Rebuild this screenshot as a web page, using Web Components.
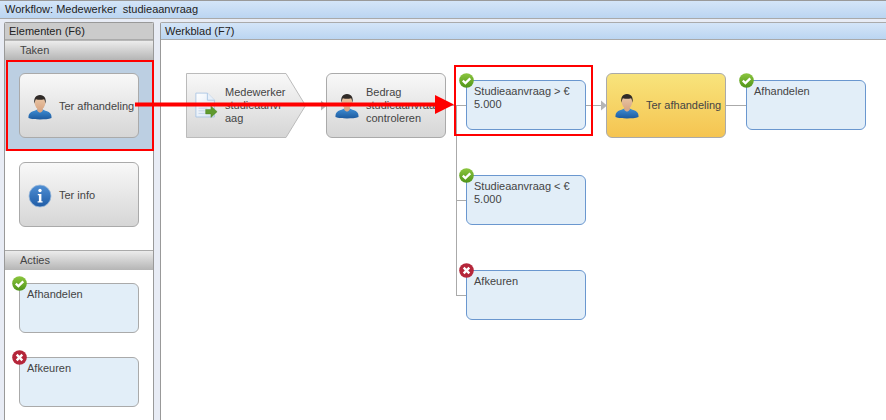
<!DOCTYPE html>
<html><head><meta charset="utf-8">
<style>
html,body{margin:0;padding:0;width:886px;height:420px;overflow:hidden;background:#e8ecf5;font:11px/13px "Liberation Sans",Arial,sans-serif;color:#444}
</style></head><body>
<wf-app>
  <wf-titlebar>Workflow: Medewerker  studieaanvraag</wf-titlebar>
  <wf-columns>
    <wf-elements>
      <wf-section>Taken</wf-section>
      <wf-tasks selected><wf-task icon="user">Ter afhandeling</wf-task></wf-tasks>
      <wf-tasks><wf-task icon="info">Ter info</wf-task></wf-tasks>
      <wf-section class="acties">Acties</wf-section>
      <wf-action status="ok">Afhandelen</wf-action>
      <wf-action status="no">Afkeuren</wf-action>
    </wf-elements>
    <wf-sheet>
      <wf-canvas>
        <wf-node kind="start" style="left:25px;top:33px" icon="doc">Medewerker studieaanvraag</wf-node>
        <wf-node kind="task" style="left:165px;top:33px" icon="user">Bedrag studieaanvraag controleren</wf-node>
        <wf-node kind="action" status="ok" style="left:305px;top:40px">Studieaanvraag &gt; € 5.000</wf-node>
        <wf-node kind="task" active style="left:445px;top:33px" icon="user">Ter afhandeling</wf-node>
        <wf-node kind="action" status="ok" style="left:585px;top:40px">Afhandelen</wf-node>
        <wf-node kind="action" status="ok" style="left:305px;top:135px">Studieaanvraag &lt; € 5.000</wf-node>
        <wf-node kind="action" status="no" style="left:305px;top:230px">Afkeuren</wf-node>
      </wf-canvas>
    </wf-sheet>
  </wf-columns>
  <wf-annotations></wf-annotations>
</wf-app>
<script>
const ICONS={
user:`<svg width="24" height="26" viewBox="0 0 26 28"><defs><linearGradient id="b" x1="0" y1="0" x2="0" y2="1"><stop offset="0" stop-color="#3f8fd6"/><stop offset="1" stop-color="#1d5a9e"/></linearGradient><linearGradient id="s" x1="0" y1="0" x2="0" y2="1"><stop offset="0" stop-color="#ecc9a8"/><stop offset="1" stop-color="#d9a987"/></linearGradient></defs>
<path d="M.5 26c0-3 .5-5 3-6.500C6 18 8.500 18 10.500 16.500h5C17.500 18 20 18 22.500 19.500c2.500 1.500 3 3.500 3 6.500-3 1.500-8 1.500-12.500 1.500S3.500 27.500.5 26z" fill="url(#b)"/>
<path d="M10 13h6v4.500c-.8 2-2 2.500-3 2.500s-2.200-.5-3-2.500z" fill="#d9a987"/>
<ellipse cx="13" cy="9.500" rx="5.800" ry="7" fill="url(#s)"/>
<path d="M7 10.500C6 5 8 1 13 1s7 4 6 9.500c-.4-2-.8-4-1.600-5-2.800.9-6 .9-8.800 0-.8 1-1.200 3-1.600 5z" fill="#2f2a27"/></svg>`,
info:`<svg width="24" height="24" viewBox="0 0 24 24"><defs><linearGradient id="i" x1="0" y1="0" x2="0" y2="1"><stop offset="0" stop-color="#4f8fd4"/><stop offset="1" stop-color="#1f5ca6"/></linearGradient></defs><circle cx="12" cy="12" r="11" fill="url(#i)" stroke="#9fbcdc" stroke-width=".8"/><circle cx="12" cy="6.500" r="1.700" fill="#fff"/><path d="M9.800 10h3.600v7.200h1.200v1.300H9.600v-1.300h1.300v-5.900H9.800z" fill="#fff"/></svg>`,
doc:`<svg width="23" height="27" viewBox="0 0 26 30"><defs><linearGradient id="d" x1="0" y1="0" x2="1" y2="1"><stop offset="0" stop-color="#fff"/><stop offset="1" stop-color="#d5e3f3"/></linearGradient></defs><path d="M1 1h13l8 8v19H1z" fill="url(#d)" stroke="#a9c4e3"/><path d="M14 1v8h8" fill="#e8f0fa" stroke="#a9c4e3"/><path d="M4 15h11M4 18h10M4 21h7M4 24h7" stroke="#c2d3e8"/><path d="M12 19.500h6v-4l7 6.500-7 6.500v-4h-6z" fill="#5f9a2e" stroke="#4a7f20" stroke-width=".5"/></svg>`
};
const BADGE={
ok:`<svg width="15" height="15" viewBox="0 0 15 15"><defs><linearGradient id="g" x1="0" y1="0" x2="0" y2="1"><stop offset="0" stop-color="#8cc63f"/><stop offset="1" stop-color="#4f9419"/></linearGradient></defs><circle cx="7.500" cy="7.500" r="7.300" fill="url(#g)"/><path d="M3.800 7.600l2.600 2.500 4.900-4.700" fill="none" stroke="#fff" stroke-width="2.300"/></svg>`,
no:`<svg width="15" height="15" viewBox="0 0 15 15"><circle cx="7.500" cy="7.500" r="7.300" fill="#b5263a"/><path d="M4.700 4.700l5.600 5.600M10.300 4.700l-5.600 5.600" fill="none" stroke="#fff" stroke-width="2.400"/></svg>`
};
function def(name,css,html){
  customElements.define(name,class extends HTMLElement{
    constructor(){super();const r=this.attachShadow({mode:'open'});
      r.innerHTML=`<style>${css}</style>`+(typeof html==='function'?html(this):html);}
  });
}
def('wf-app',`:host{display:flex;flex-direction:column;width:886px;height:420px;position:relative;overflow:hidden}`,`<slot></slot>`);
def('wf-titlebar',`:host{display:block;height:17px;line-height:17px;padding-left:5px;white-space:pre;color:#222;border-top:1px solid #999;border-bottom:1px solid #a9a9a9;background:linear-gradient(#d4e5f8,#bbd5f1)}`,`<slot></slot>`);
def('wf-columns',`:host{display:flex;flex:1;gap:6px;padding:3px 0 0 4px;min-height:0}`,`<slot></slot>`);
def('wf-elements',`:host{display:flex;flex-direction:column;width:148px;flex:none;background:#fff;border:1px solid #999;border-bottom:0;border-radius:2px 2px 0 0;overflow:hidden}
 header{height:16px;line-height:16px;padding-left:4px;color:#222;background:#cbcbcb;border-bottom:1px solid #aaa;flex:none}`,`<header>Elementen (F6)</header><slot></slot>`);
def('wf-section',`:host{display:block;flex:none;height:19px;line-height:19px;padding-left:15px;color:#444;background:linear-gradient(#ececec,#b5b5b5);border-top:1px solid transparent}
 :host(.acties){border-top:1px solid #aaa;margin-top:23px}`,`<slot></slot>`);
def('wf-tasks',`:host{display:flex;flex:none;height:65px;padding:11px 14px 0}
 :host([selected]){background:#bccfe2;padding:13px 14px}`,`<slot></slot>`);
def('wf-task',`:host{display:flex;align-items:center;gap:7px;width:120px;box-sizing:border-box;height:65px;padding:2px 0 0 8px;border:1px solid #aaa;border-radius:6px;background:linear-gradient(#f8f8f8,#d6d6d6);white-space:nowrap;flex:none}
 span{display:flex;width:24px;justify-content:center;flex:none}`,el=>`<span>${ICONS[el.getAttribute('icon')]}</span><slot></slot>`);
def('wf-action',`:host{display:block;position:relative;flex:none;box-sizing:border-box;width:120px;height:50px;margin:13px 0 11px 14px;padding:4px 7px;border:1px solid #aaa;border-radius:6px;background:#e2eef8}
 i{position:absolute;left:-8px;top:-8px;width:15px;height:15px;display:block}`,el=>`<i>${BADGE[el.getAttribute('status')]}</i><slot></slot>`);
def('wf-sheet',`:host{display:flex;flex-direction:column;flex:1;min-width:0;border-left:1px solid #999;border-top:1px solid #aaa;border-radius:2px 0 0 0;overflow:hidden}
 header{height:16px;line-height:16px;padding-left:4px;color:#222;background:linear-gradient(#d4e5f8,#bbd5f1);border-bottom:1px solid #a9a9a9;flex:none}`,`<header>Werkblad (F7)</header><slot></slot>`);
def('wf-canvas',`:host{display:block;position:relative;flex:1;background:#fff}
 svg{position:absolute;left:0;top:0}`,`<svg width="726" height="380" fill="none"><path d="M285 65.500h20M425 65.500h15M565 65.500h20M295.500 65v190M295 160.500h10M295 255.500h10M145 65.500h15" stroke="#aaa"/><path d="M440 60.500l6 5-6 5z M160 60.500l6 5-6 5z" fill="#b5b5b5"/></svg><slot></slot>`);
def('wf-node',`:host{display:block;position:absolute;box-sizing:border-box;width:120px}
 :host([kind=action]){height:50px;padding:4px 7px;border:1px solid #6a97cf;border-radius:6px;background:#e2eef8}
 :host([kind=task]){height:65px;border:1px solid #aaa;border-radius:6px;background:linear-gradient(#f8f8f8,#d6d6d6);display:flex;align-items:center;gap:7px;padding-left:8px}
 :host([active]){background:linear-gradient(#f8e47c,#f5c451)}
 :host([kind=start]){height:65px;display:flex;align-items:center;padding-left:39px}
 .shape{position:absolute;left:0;top:0}
 .ic{flex:none;width:24px;display:flex;justify-content:center;margin-top:1px}
 .start-ic{position:absolute;left:9px;top:19px}
 i{position:absolute;left:-8px;top:-8px;width:15px;height:15px;display:block}
 .t{position:relative;flex:none;width:81px}
 :host([kind=start]) .t{width:62px;word-break:break-all}
 :host([kind=action]) .t{width:auto}`,el=>{
  const k=el.getAttribute('kind');
  if(k==='start')return `<svg class="shape" width="120" height="65"><defs><linearGradient id="h" x1="0" y1="0" x2="0" y2="1"><stop offset="0" stop-color="#f8f8f8"/><stop offset="1" stop-color="#d6d6d6"/></linearGradient></defs><path d="M.5.500H100L119.500 32.500 100 64.500H.5z" fill="url(#h)" stroke="#bbb"/></svg><span class="start-ic">${ICONS.doc}</span><div class="t"><slot></slot></div>`;
  if(k==='task')return `<span class="ic">${ICONS[el.getAttribute('icon')]}</span><div class="t"><slot></slot></div>`;
  return `<i>${BADGE[el.getAttribute('status')]}</i><div class="t"><slot></slot></div>`;
});
def('wf-annotations',`:host{position:absolute;left:0;top:0;width:886px;height:420px;pointer-events:none}
 b{position:absolute;box-sizing:border-box;border:2px solid #f00}
 svg{position:absolute;left:0;top:0}`,`<b style="left:6px;top:60px;width:148px;height:91px"></b><b style="left:454px;top:65px;width:139px;height:71px"></b>
 <svg width="886" height="420"><path d="M135 102.500h300V95l19 9.500-19 9.500v-7.500H135z" fill="#f00"/></svg>`);
</script>
</body></html>
